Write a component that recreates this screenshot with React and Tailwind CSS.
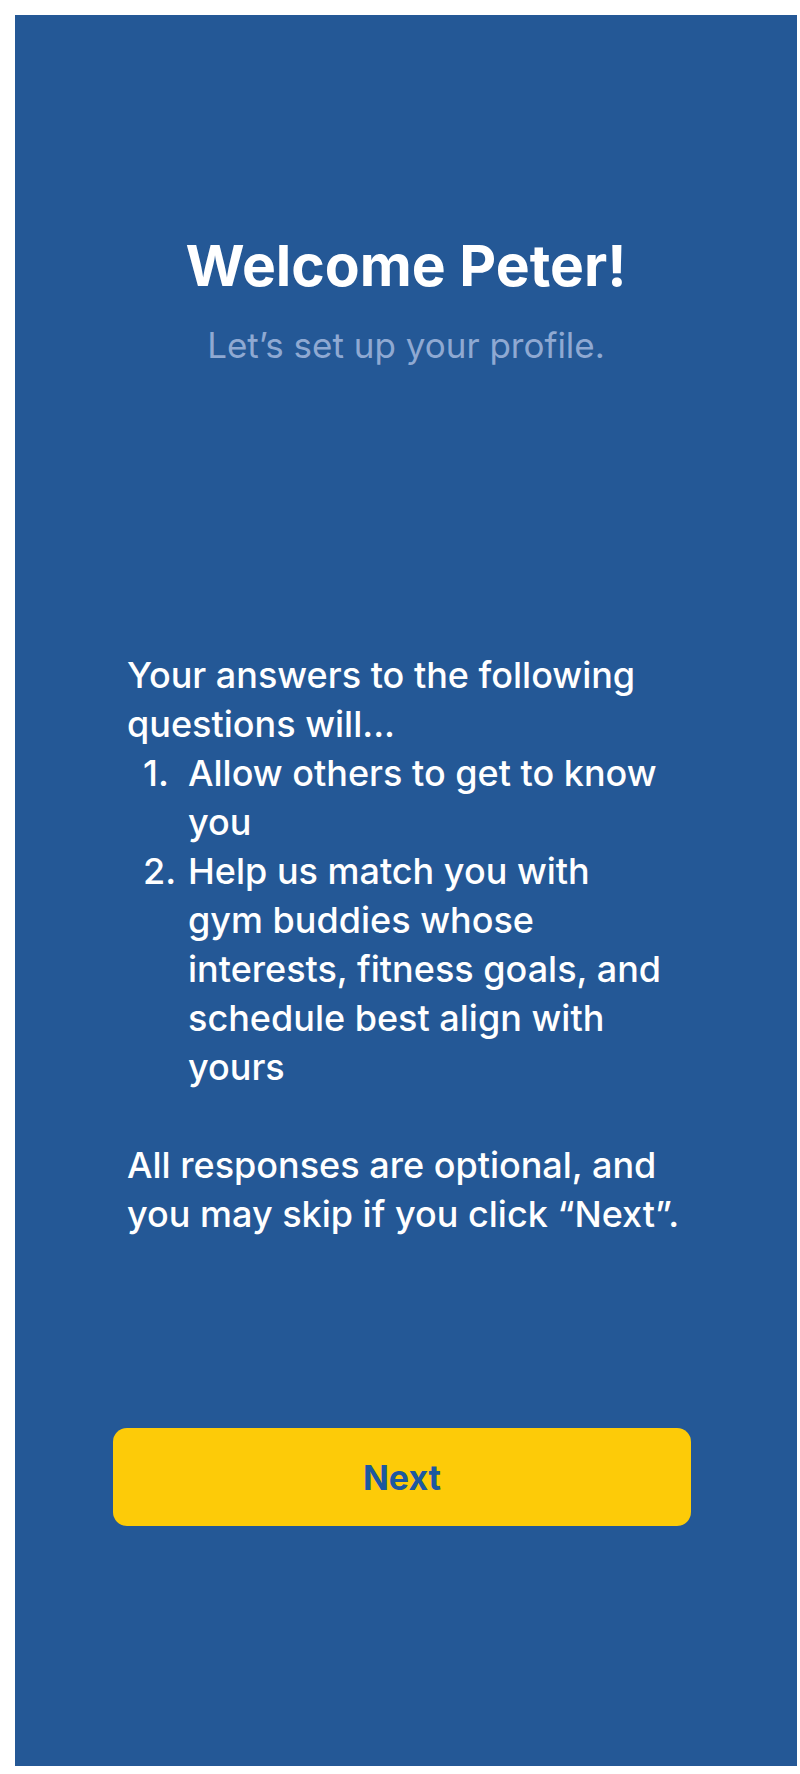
import React from 'react'

const App = () => {
  return (
    <div className="min-h-screen bg-white pl-[15px] pr-[3px] pt-[15px] pb-2 font-['Inter','Liberation_Sans',sans-serif]">
      <div className="flex flex-col h-[1751px] bg-[#245896]">
        {/* the greeting */}
        <h1 className="mt-[216px] text-center text-[57px] leading-[70px] font-bold text-white">
          Welcome Peter!
        </h1>
        <p className="mt-[21px] text-center text-[35px] leading-[46px] text-[#8fa9d2]">
          Let’s set up your profile.
        </p>

        {/* the explanation */}
        <div className="mt-[283px] ml-[112px] w-[568px] text-[36px] leading-[49px] font-medium text-white">
          <p>Your answers to the following questions will...</p>
          <ol className="pr-[28px]">
            <li className="flex">
              <span className="w-[45px] shrink-0 ml-[16px]">1.</span>
              <span>Allow others to get to know you</span>
            </li>
            <li className="flex">
              <span className="w-[45px] shrink-0 ml-[16px]">2.</span>
              <span>Help us match you with gym buddies whose interests, fitness goals, and schedule best align with yours</span>
            </li>
          </ol>
          <p className="mt-[49px]">All responses are optional, and you may skip if you click “Next”.</p>
        </div>

        {/* the button */}
        <div className="mt-[189px] pl-[98px]">
          <button className="w-[578px] h-[98px] rounded-[14px] bg-[#fdcb08] text-[34px] font-bold text-[#1c58a0]">
            Next
          </button>
        </div>
      </div>
    </div>
  )
}

export default App
